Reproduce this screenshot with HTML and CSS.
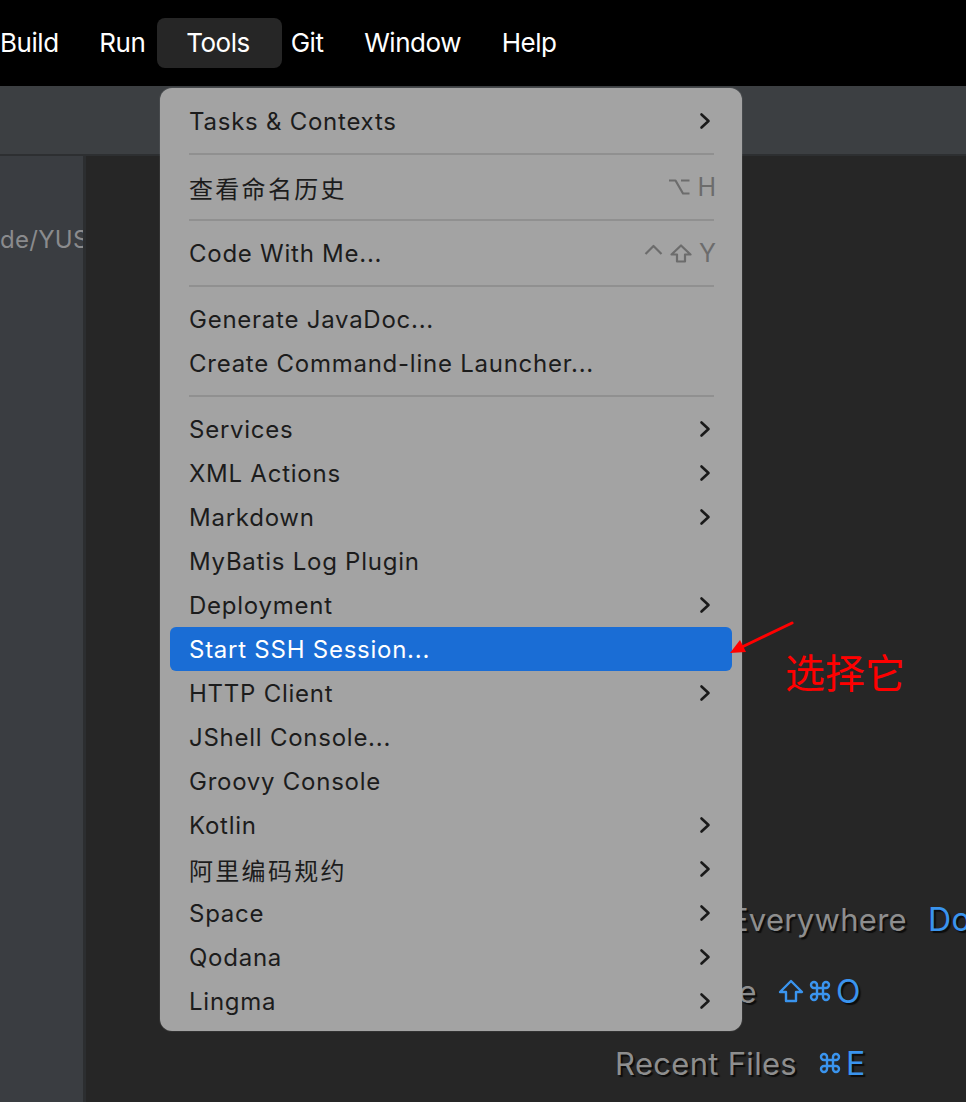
FILE: index.html
```html
<!DOCTYPE html>
<html>
<head>
<meta charset="utf-8">
<title>Tools menu</title>
<link rel="stylesheet" href="styles.css">
</head>
<body>
<div class="screen">
  <header class="menubar">
    <span class="mb-item first">Build</span>
    <span class="mb-item">Run</span>
    <span class="mb-item active">Tools</span>
    <span class="mb-item">Git</span>
    <span class="mb-item">Window</span>
    <span class="mb-item">Help</span>
  </header>
  <div class="toolbar"></div>
  <div class="main">
    <aside class="project"><div class="path">de/YUSHU/IdeaProjects</div></aside>
    <section class="editor">
      <div class="hint h1"><span class="hint-label">Search Everywhere</span><span class="hint-key">Double <svg class="bk-shift" viewBox="0 0 26 24"><path d="M13 2 L24 13 H18 V22 H8 V13 H2 Z"/></svg></span></div>
      <div class="hint h2"><span class="hint-label">Go to File</span><span class="hint-key"><svg class="bk-shift" viewBox="0 0 26 24"><path d="M13 2 L24 13 H18 V22 H8 V13 H2 Z"/></svg><svg class="bk-cmd" viewBox="0 0 24 24"><path d="M18 3a3 3 0 0 0-3 3v12a3 3 0 0 0 3 3 3 3 0 0 0 3-3 3 3 0 0 0-3-3H6a3 3 0 0 0-3 3 3 3 0 0 0 3 3 3 3 0 0 0 3-3V6a3 3 0 0 0-3-3 3 3 0 0 0-3 3 3 3 0 0 0 3 3h12a3 3 0 0 0 3-3 3 3 0 0 0-3-3z"/></svg>O</span></div>
      <div class="hint h3"><span class="hint-label">Recent Files</span><span class="hint-key"><svg class="bk-cmd" viewBox="0 0 24 24"><path d="M18 3a3 3 0 0 0-3 3v12a3 3 0 0 0 3 3 3 3 0 0 0 3-3 3 3 0 0 0-3-3H6a3 3 0 0 0-3 3 3 3 0 0 0 3 3 3 3 0 0 0 3-3V6a3 3 0 0 0-3-3 3 3 0 0 0-3 3 3 3 0 0 0 3 3h12a3 3 0 0 0 3-3 3 3 0 0 0-3-3z"/></svg>E</span></div>
    </section>
  </div>

  <div class="dropdown">
    <div class="row"><span class="label">Tasks &amp; Contexts</span><svg class="chev" viewBox="0 0 12 18"><polyline points="2.5,2.5 9.5,9 2.5,15.5"/></svg></div>
    <div class="sep"></div>
    <div class="row"><span class="label cjk">查看命名历史</span><span class="keys"><svg class="k-opt" viewBox="0 0 22 18"><path d="M1 2.5h6.5l7.5 13h6.5M13 2.5h8.5"/></svg><span class="k-char">H</span></span></div>
    <div class="sep"></div>
    <div class="row"><span class="label">Code With Me...</span><span class="keys"><svg class="k-ctrl" viewBox="0 0 19 18"><polyline points="1.5,10 9.5,2 17.5,10"/></svg><svg class="k-shift" viewBox="0 0 22 19"><path d="M11 1.5 L20.5 10.5 H15 V17.5 H7 V10.5 H1.5 Z"/></svg><span class="k-char">Y</span></span></div>
    <div class="sep"></div>
    <div class="row"><span class="label">Generate JavaDoc...</span></div>
    <div class="row"><span class="label">Create Command-line Launcher...</span></div>
    <div class="sep"></div>
    <div class="row"><span class="label">Services</span><svg class="chev" viewBox="0 0 12 18"><polyline points="2.5,2.5 9.5,9 2.5,15.5"/></svg></div>
    <div class="row"><span class="label">XML Actions</span><svg class="chev" viewBox="0 0 12 18"><polyline points="2.5,2.5 9.5,9 2.5,15.5"/></svg></div>
    <div class="row"><span class="label">Markdown</span><svg class="chev" viewBox="0 0 12 18"><polyline points="2.5,2.5 9.5,9 2.5,15.5"/></svg></div>
    <div class="row"><span class="label">MyBatis Log Plugin</span></div>
    <div class="row"><span class="label">Deployment</span><svg class="chev" viewBox="0 0 12 18"><polyline points="2.5,2.5 9.5,9 2.5,15.5"/></svg></div>
    <div class="row sel"><span class="label">Start SSH Session...</span></div>
    <div class="row"><span class="label">HTTP Client</span><svg class="chev" viewBox="0 0 12 18"><polyline points="2.5,2.5 9.5,9 2.5,15.5"/></svg></div>
    <div class="row"><span class="label">JShell Console...</span></div>
    <div class="row"><span class="label">Groovy Console</span></div>
    <div class="row"><span class="label">Kotlin</span><svg class="chev" viewBox="0 0 12 18"><polyline points="2.5,2.5 9.5,9 2.5,15.5"/></svg></div>
    <div class="row"><span class="label cjk">阿里编码规约</span><svg class="chev" viewBox="0 0 12 18"><polyline points="2.5,2.5 9.5,9 2.5,15.5"/></svg></div>
    <div class="row"><span class="label">Space</span><svg class="chev" viewBox="0 0 12 18"><polyline points="2.5,2.5 9.5,9 2.5,15.5"/></svg></div>
    <div class="row"><span class="label">Qodana</span><svg class="chev" viewBox="0 0 12 18"><polyline points="2.5,2.5 9.5,9 2.5,15.5"/></svg></div>
    <div class="row"><span class="label">Lingma</span><svg class="chev" viewBox="0 0 12 18"><polyline points="2.5,2.5 9.5,9 2.5,15.5"/></svg></div>
  </div>

  <svg class="annot" viewBox="0 0 966 1102">
    <line x1="792" y1="623" x2="742" y2="647"/>
    <polygon points="730,653 746,652 740,640"/>
  </svg>
  <div class="annot-text">选择它</div>
</div>
</body>
</html>
```

FILE: styles.css
```css
* { box-sizing: border-box; }
html, body { margin: 0; padding: 0; }
body {
  width: 966px;
  height: 1102px;
  overflow: hidden;
  background: #262626;
  font-family: Inter, "Noto Sans", "Noto Sans CJK SC", sans-serif;
}
.screen {
  position: relative;
  width: 966px;
  height: 1102px;
  display: flex;
  flex-direction: column;
  overflow: hidden;
}

/* top menubar */
.menubar {
  flex: none;
  height: 86px;
  background: #000;
  display: flex;
  align-items: center;
  padding-left: 0;
  color: #fff;
  font-size: 26px;
  letter-spacing: -0.45px;
  white-space: nowrap;
}
.mb-item { padding: 0 20.3px; line-height: 50px; }
.mb-item.first { padding-left: 0; }
.mb-item.active {
  background: #262626;
  border-radius: 8px;
  padding: 0 32px 0 29.5px;
  margin: 0 -11.5px 0 -9px;
}

.toolbar {
  flex: none;
  height: 70px;
  background: #3c3f42;
  border-bottom: 2px solid #2d2f31;
}

.main { flex: 1; display: flex; min-height: 0; }
.project {
  flex: none;
  width: 86px;
  background: #3a3d41;
  border-right: 3px solid #2c2e30;
  overflow: hidden;
}
.path {
  margin-top: 71px;
  padding-left: 0;
  color: #8a8b8d;
  font-size: 24px;
  line-height: 26px;
  letter-spacing: 0.3px;
  white-space: nowrap;
}

.editor {
  flex: 1;
  background: #262626;
  padding-top: 727px;
  font-size: 31px;
  letter-spacing: 0.3px;
  color: #8e8e8e;
  overflow: hidden;
}
.hint {
  display: flex;
  align-items: center;
  height: 72px;
  white-space: nowrap;
}
.hint-label {
  flex: none;
  text-align: right;
  text-shadow: 2px 2px 1px #0c0c0c;
}
.h1 .hint-label { width: 821px; }
.h2 .hint-label { width: 671px; }
.h3 .hint-label { width: 711px; }
.hint-key {
  margin-left: 21px;
  color: #3a94ee;
  font-size: 32px;
  display: flex;
  align-items: center;
  gap: 4px;
  text-shadow: 2px 2px 1px #0c0c0c;
}
.hint-key svg { fill: none; stroke: #3a94ee; stroke-width: 2.4; stroke-linejoin: round; }
.bk-shift { width: 26px; height: 24px; }
.bk-cmd { width: 24px; height: 24px; }

/* dropdown */
.dropdown {
  position: absolute;
  left: 160px;
  top: 88px;
  width: 582px;
  height: 943px;
  background: #a3a3a3;
  border-radius: 12px;
  padding: 11px 10px 8px;
  color: #1c1c1c;
  font-size: 24px;
  letter-spacing: 0.75px;
  box-shadow: 0 0 0 1px rgba(255,255,255,0.06);
}
.row {
  height: 44px;
  display: flex;
  align-items: center;
  padding: 0 21px 0 19px;
  border-radius: 6px;
  white-space: nowrap;
}
.row.sel { background: #1a6dd5; color: #fff; }
.label { flex: 1; }
.label.cjk { letter-spacing: 2.3px; }
.chev {
  width: 12px;
  height: 18px;
  fill: none;
  stroke: #1a1a1a;
  stroke-width: 2.6;
  stroke-linecap: round;
  stroke-linejoin: round;
}
.sep {
  height: 22px;
  display: flex;
  align-items: center;
  padding: 0 18px 0 19px;
}
.sep::after {
  content: "";
  flex: 1;
  height: 2px;
  background: #909090;
}
.keys {
  display: flex;
  align-items: center;
  gap: 7px;
  margin-right: -5px;
  color: #6c6c6c;
  font-size: 25px;
  letter-spacing: 0;
}
.keys svg {
  fill: none;
  stroke: #6c6c6c;
  stroke-width: 2.2;
  stroke-linejoin: round;
}
.k-opt { width: 22px; height: 18px; }
.k-ctrl { width: 19px; height: 18px; }
.k-shift { width: 22px; height: 19px; }
.k-char { line-height: 1; }

/* annotation */
.annot {
  position: absolute;
  left: 0;
  top: 0;
  width: 966px;
  height: 1102px;
  pointer-events: none;
}
.annot line { stroke: #ff0000; stroke-width: 3; stroke-linecap: round; }
.annot polygon { fill: #ff0000; }
.annot-text {
  position: absolute;
  left: 785px;
  top: 651px;
  font-family: "Noto Sans CJK SC", sans-serif;
  font-size: 40px;
  line-height: 40px;
  color: #ff0000;
}
```
